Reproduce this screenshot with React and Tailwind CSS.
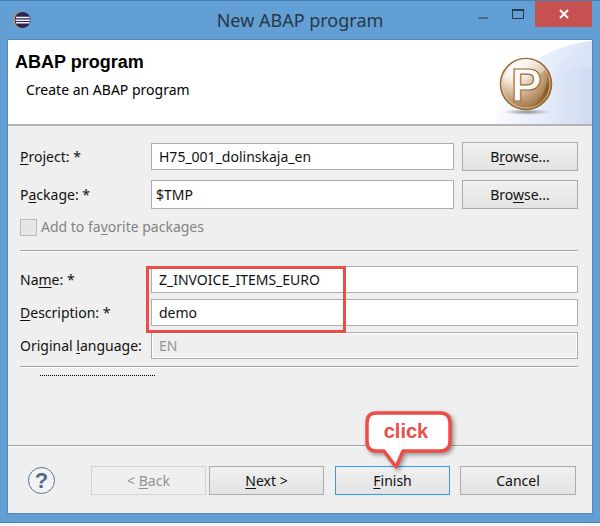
import React from "react";

function Key({ children }) {
  return <span className="underline decoration-1 underline-offset-2">{children}</span>;
}

function EclipseIcon() {
  return (
    <svg className="h-[18px] w-[18px]" viewBox="0 0 18 18" aria-hidden="true">
      <circle cx="8.5" cy="9" r="8" fill="#e79a3c" />
      <circle cx="9.6" cy="9" r="8" fill="#2d2458" />
      <path d="M3 6.6h13.6M2.4 9.2h14.8M3 11.8h13.6" stroke="#f1f0f8" strokeWidth="1.5" />
    </svg>
  );
}

function ProgramBanner() {
  return (
    <svg className="h-[84px] w-[98px] shrink-0" viewBox="0 0 98 84" role="img" aria-label="ABAP program">
      <defs>
        <linearGradient id="swoosh" x1="0" x2="1">
          <stop offset="0" stopColor="#f8faff" />
          <stop offset="1" stopColor="#dbe4f6" />
        </linearGradient>
        <linearGradient id="hill" x1="0" x2="1">
          <stop offset="0" stopColor="#fafbff" />
          <stop offset="1" stopColor="#cfdbf2" />
        </linearGradient>
        <radialGradient id="ball" cx="0.28" cy="0.24" r="0.85">
          <stop offset="0" stopColor="#fffdf9" />
          <stop offset="0.3" stopColor="#eee2d3" />
          <stop offset="0.65" stopColor="#c3a27d" />
          <stop offset="1" stopColor="#94652f" />
        </radialGradient>
        <linearGradient id="gloss" x1="0" y1="0" x2="0" y2="1">
          <stop offset="0" stopColor="#fff" stopOpacity="0.75" />
          <stop offset="1" stopColor="#fff" stopOpacity="0.05" />
        </linearGradient>
        <linearGradient id="shade" x1="0" y1="0" x2="0" y2="1">
          <stop offset="0" stopColor="#7c4a19" stopOpacity="0.1" />
          <stop offset="0.5" stopColor="#7c4a19" stopOpacity="0.7" />
          <stop offset="1" stopColor="#7c4a19" stopOpacity="0.1" />
        </linearGradient>
        <radialGradient id="ground">
          <stop offset="0" stopColor="#777" stopOpacity="0.8" />
          <stop offset="1" stopColor="#777" stopOpacity="0" />
        </radialGradient>
      </defs>
      <path d="M2 84C3 49 38 7 98 1V84Z" fill="url(#swoosh)" />
      <path d="M52 54C57 31 74 9 98 1V84H52Z" fill="#d9e3f7" opacity="0.45" />
      <path d="M2 84C4 71 10 62 22 57C44 44 67 28 98 27V84Z" fill="url(#hill)" />
      <ellipse cx="33" cy="72" rx="23" ry="3" fill="url(#ground)" />
      <circle cx="32" cy="44" r="25.5" fill="url(#ball)" stroke="#966630" strokeWidth="1.5" />
      <circle cx="32" cy="44" r="24" fill="none" stroke="#e3cfb5" strokeWidth="0.8" />
      <path d="M9 43A23 23 0 0 1 51 29C44 43 24 38 9 43Z" fill="url(#gloss)" />
      <path d="M53 31C60 46 52 64 37 68C48 59 54 48 53 31Z" fill="url(#shade)" />
      <text x="17" y="61" fontFamily="Liberation Sans, sans-serif" fontWeight="700" fontSize="46" fill="#fffdfa" stroke="#a06d37" strokeWidth="1.2">P</text>
    </svg>
  );
}

const field = "w-full min-w-0 border border-[#abadb3] bg-white pb-px outline-none";
const button = "h-[29px] border border-[#acacac] bg-linear-to-b from-[#f0f0f0] to-[#e3e3e3] text-center";
const rule = "border-t border-[#a0a0a0] border-b border-b-white";

export default function App() {
  return (
    <div className="flex min-h-screen flex-col bg-[#f6f6f8] pb-[3px] font-['Noto_Sans','Open_Sans',sans-serif] text-[14px] leading-5 text-[#111]">
      <section className="flex flex-1 flex-col border-t border-b border-[#447fb0] bg-[#629fd5] px-2 pb-[9px]" aria-label="New ABAP program">
        <header className="grid h-[39px] grid-cols-[1fr_auto_1fr] items-start">
          <div className="pt-[10px] pl-[5px]"><EclipseIcon /></div>
          <h1 className="pt-[7px] text-[18px] leading-6 text-[#293846]">New ABAP program</h1>
          <div className="flex justify-end">
            <button aria-label="Minimize" className="flex h-[26px] w-[34px] items-center justify-center">
              <svg className="h-4 w-4" viewBox="0 0 16 16"><path d="M3 12h10" stroke="#4b6d8b" strokeWidth="2" /></svg>
            </button>
            <button aria-label="Maximize" className="flex h-[26px] w-[35px] items-center justify-center">
              <svg className="h-4 w-4" viewBox="0 0 16 16"><path d="M2.500 3.500h11v9h-11z" fill="none" stroke="#263a4c" /><path d="M2 4h12" stroke="#263a4c" strokeWidth="2" /></svg>
            </button>
            <button aria-label="Close" className="flex h-[26px] w-[57px] items-center justify-center bg-[#c75050]">
              <svg className="h-4 w-4" viewBox="0 0 16 16"><path d="M4 4l8 8M12 4l-8 8" stroke="#fff" strokeWidth="2" /></svg>
            </button>
          </div>
        </header>

        <main className="flex flex-1 flex-col bg-[#efefef] outline outline-[#5588b5]">
          <div className="flex justify-between border-b-2 border-[#b4b4b4] bg-white">
            <div className="pt-[10px] pl-[7px]">
              <h2 className="font-['Liberation_Sans',Arial,sans-serif] text-[18px] leading-6 font-bold text-black">ABAP program</h2>
              <p className="pt-[6px] pl-[11px] text-black">Create an ABAP program</p>
            </div>
            <ProgramBanner />
          </div>

          <form className="flex flex-1 flex-col" onSubmit={(e) => e.preventDefault()}>
            <div className="flex-1 pt-4 pr-[14px] pl-3">
              <div className="grid grid-cols-[131px_minmax(0,1fr)_124px] items-center gap-y-[9px]">
                <label htmlFor="project"><Key>P</Key>roject: *</label>
                <input id="project" className={`${field} h-[27px] px-[7px]`} defaultValue="H75_001_dolinskaja_en" />
                <button type="button" className={`${button} w-[116px] justify-self-end`}>B<Key>r</Key>owse...</button>
                <label htmlFor="package">P<Key>a</Key>ckage: *</label>
                <input id="package" className={`${field} h-[29px] px-1`} defaultValue="$TMP" />
                <button type="button" className={`${button} w-[116px] justify-self-end`}>Bro<Key>w</Key>se...</button>
              </div>
              <div className="flex items-center gap-1 pt-2 text-[#838383]">
                <input id="favorite" type="checkbox" disabled className="h-[17px] w-[17px] appearance-none border border-[#bcbcbc] bg-[#e6e6e6]" />
                <label htmlFor="favorite">Add to fa<Key>v</Key>orite packages</label>
              </div>
              <div className={`${rule} mt-[13px]`} />
              <div className="relative mt-[14px] grid grid-cols-[131px_minmax(0,1fr)] items-center gap-y-[6px]">
                <label htmlFor="name">Na<Key>m</Key>e: *</label>
                <input id="name" className={`${field} h-[27px] px-[7px]`} defaultValue="Z_INVOICE_ITEMS_EURO" />
                <label htmlFor="description"><Key>D</Key>escription: *</label>
                <input id="description" className={`${field} h-[27px] px-[7px]`} defaultValue="demo" />
                <label htmlFor="language" className="whitespace-nowrap">Original <Key>l</Key>anguage:</label>
                <input id="language" disabled className="h-[27px] w-full border border-[#abadb3] bg-[#efefef] px-[7px] pb-px text-[#969696] inset-ring inset-ring-white" defaultValue="EN" />
                <div className="pointer-events-none absolute top-0 left-[126px] h-[67px] w-[200px] border-[3px] border-[#ee4d47]" />
              </div>
              <div className={`${rule} mt-[7px]`} />
              <div className="mt-[7px] ml-5 w-[115px] border-t border-dotted border-black" />
            </div>

            <div className={rule} />
            <footer className="flex items-center pt-[19px] pr-4 pb-[18px] pl-5">
              <button type="button" aria-label="Help" className="h-[27px] w-[27px] rounded-full border border-[#5b718e] bg-[#f2f3f5] text-center font-['Liberation_Sans',Arial,sans-serif] text-[22px] leading-6 font-bold text-[#526987]">?</button>
              <div className="ml-auto flex">
                <button type="button" disabled className="h-[29px] w-[115px] border border-[#d4d4d4] bg-[#efefef] text-[#939393]">&lt; <Key>B</Key>ack</button>
                <button type="button" className={`${button} ml-[3px] w-[115px]`}><Key>N</Key>ext &gt;</button>
                <div className="relative ml-[11px]">
                  <button type="submit" className="h-[29px] w-[115px] border border-[#3399ff] bg-linear-to-b from-[#f0f0f0] to-[#e3e3e3]"><Key>F</Key>inish</button>
                  <div className="pointer-events-none absolute -top-[56px] left-[29px] h-[64px] w-[92px] text-center font-['Liberation_Sans',Arial,sans-serif] text-[20px] leading-[42px] font-bold text-[#e94f49]">
                    <svg className="absolute inset-0 h-full w-full overflow-visible drop-shadow-[2px_2px_2px_#0006]" viewBox="0 0 92 64" aria-hidden="true">
                      <path d="M12 3H76Q86 3 86 13V31Q86 41 76 41H39L32 57L20 41H12Q3 41 3 31V13Q3 3 12 3Z" fill="#fff" stroke="#ee4d47" strokeWidth="3.500" strokeLinejoin="round" />
                    </svg>
                    <span className="relative -left-1">click</span>
                  </div>
                </div>
                <button type="button" className={`${button} ml-[10px] w-[116px]`}>Cancel</button>
              </div>
            </footer>
          </form>
        </main>
      </section>
    </div>
  );
}
